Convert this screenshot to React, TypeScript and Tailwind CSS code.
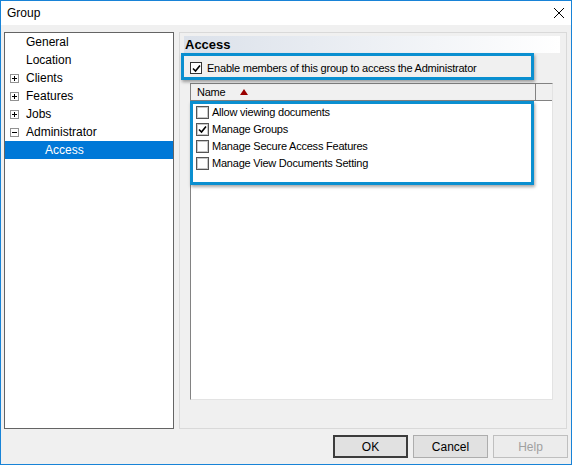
import { useState } from 'react';

const treeItems = [
  { label: 'General', toggle: null as null | '+' | '-', indent: false },
  { label: 'Location', toggle: null, indent: false },
  { label: 'Clients', toggle: '+', indent: false },
  { label: 'Features', toggle: '+', indent: false },
  { label: 'Jobs', toggle: '+', indent: false },
  { label: 'Administrator', toggle: '-', indent: false },
  { label: 'Access', toggle: null, indent: true },
];

const permissions = [
  { label: 'Allow viewing documents', checked: false },
  { label: 'Manage Groups', checked: true },
  { label: 'Manage Secure Access Features', checked: false },
  { label: 'Manage View Documents Setting', checked: false },
];

function CheckMark() {
  return (
    <svg viewBox="0 0 9 9" className="w-[9px] h-[9px]">
      <polyline points="1,4.5 3.5,7 8,1.5" fill="none" stroke="#000" strokeWidth="1.6" />
    </svg>
  );
}

function ToggleBox({ kind }: { kind: '+' | '-' }) {
  return (
    <svg viewBox="0 0 9 9" className="w-[9px] h-[9px]">
      <rect x="0.5" y="0.5" width="8" height="8" fill="#fff" stroke="#919191" />
      <line x1="2" y1="4.5" x2="7" y2="4.5" stroke="#000" />
      {kind === '+' && <line x1="4.5" y1="2" x2="4.5" y2="7" stroke="#000" />}
    </svg>
  );
}

export default function App() {
  const [selected] = useState('Access');

  return (
    <div className="w-[572px] h-[465px] border border-[#1883d7] bg-[#f0f0f0] flex flex-col overflow-hidden font-['Liberation_Sans',Arial,sans-serif] text-black">
      {/* title bar */}
      <div className="h-[24px] bg-white flex items-center justify-between pl-[6px] pr-[6px] shrink-0">
        <span className="text-[12px]">Group</span>
        <svg viewBox="0 0 10 10" className="w-[10px] h-[10px] mr-[1px]">
          <line x1="0" y1="0" x2="10" y2="10" stroke="#000" strokeWidth="1" />
          <line x1="10" y1="0" x2="0" y2="10" stroke="#000" strokeWidth="1" />
        </svg>
      </div>

      <div className="flex gap-[5px] pl-[3px] pt-[7px]">
        {/* tree */}
        <div className="w-[170px] h-[397px] bg-white border border-[#646464]">
          {treeItems.map((item) => (
            <div
              key={item.label}
              className={`h-[18px] flex items-center text-[12px] ${
                selected === item.label ? 'bg-[#0078d7] text-white' : ''
              }`}
            >
              <div className="w-[21px] flex justify-end pr-[7px] shrink-0">
                {item.toggle && <ToggleBox kind={item.toggle} />}
              </div>
              <span className={item.indent ? 'pl-[19px]' : ''}>{item.label}</span>
            </div>
          ))}
        </div>

        {/* right panel */}
        <div className="relative w-[388px] h-[397px] border border-[#d9d9d9] pl-[4px] pt-[3px]">
          <div className="w-[376px] h-[17px] flex items-center pl-[1px] bg-gradient-to-r from-[#dbe1ea] to-[#ffffff]">
            <span className="text-[13px] font-bold leading-none">Access</span>
          </div>

          <div className="h-[30px] flex items-center pl-[6px] text-[11px] tracking-[-0.22px]">
            <div className="w-[12px] h-[12px] border border-[#333] bg-white flex items-center justify-center mr-[5px]">
              <CheckMark />
            </div>
            <span>Enable members of this group to access the Administrator</span>
          </div>

          {/* list view */}
          <div className="ml-[6px] w-[363px] h-[317px] bg-white border-l border-t border-[#828282] border-r border-r-[#e3e3e3] border-b border-b-[#e3e3e3] text-[11px] tracking-[-0.22px]">
            <div className="h-[17px] flex bg-[#f0f0f0] border-b border-[#828282]">
              <div className="w-[345px] flex items-center pl-[6px] border-r border-[#828282]">
                <span>Name</span>
                <svg viewBox="0 0 8 6" className="w-[8px] h-[6px] ml-[15px]">
                  <polygon points="4,0 8,6 0,6" fill="#990000" />
                </svg>
              </div>
              <div className="flex-1" />
            </div>
            <div className="pt-[3px]">
              {permissions.map((p) => (
                <div key={p.label} className="h-[17px] flex items-center pl-[5px]">
                  <div className="w-[13px] h-[13px] border border-[#555] bg-white flex items-center justify-center mr-[3px]">
                    <div className="w-[11px] h-[11px] border border-[#c8c8c8] flex items-center justify-center">
                      {p.checked && <CheckMark />}
                    </div>
                  </div>
                  <span>{p.label}</span>
                </div>
              ))}
            </div>
          </div>

          {/* annotation boxes */}
          <div className="absolute left-[1px] top-[20px] w-[353px] h-[27px] border-[3px] border-[#0a8fd0] shadow-[1px_2px_3px_rgba(0,0,0,0.35)] pointer-events-none" />
          <div className="absolute left-[10px] top-[68px] w-[344px] h-[84px] border-[3px] border-[#0a8fd0] shadow-[1px_2px_3px_rgba(0,0,0,0.35)] pointer-events-none" />
        </div>
      </div>

      {/* buttons */}
      <div className="flex justify-end gap-[5px] pr-[3px] pt-[6px]">
        <button className="w-[75px] h-[23px] bg-[#e1e1e1] border-2 border-[#3c3c3c] text-[12px]">OK</button>
        <button className="w-[75px] h-[23px] bg-[#e1e1e1] border border-[#adadad] text-[12px]">Cancel</button>
        <button className="w-[75px] h-[23px] bg-[#ececec] border border-[#bfbfbf] text-[12px] text-[#a0a0a0]">Help</button>
      </div>
    </div>
  );
}
